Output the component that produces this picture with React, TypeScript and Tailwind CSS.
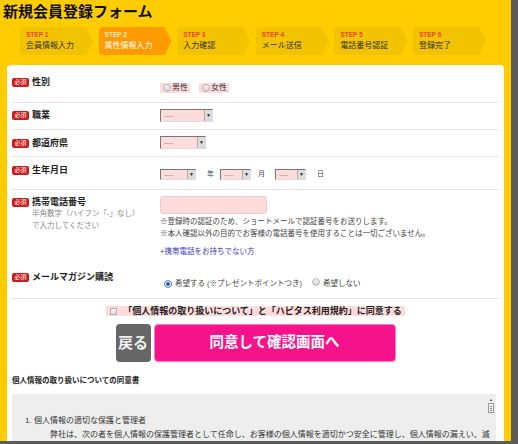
import React from 'react'

const STEPS = [
  { n: 1, label: '会員情報入力' },
  { n: 2, label: '属性情報入力', active: true },
  { n: 3, label: '入力確認' },
  { n: 4, label: 'メール送信' },
  { n: 5, label: '電話番号認証' },
  { n: 6, label: '登録完了' },
]

function Badge() {
  return (
    <span className="inline-flex h-[9px] w-[17px] shrink-0 items-center justify-center rounded-[2px] bg-[#cc1a1a] text-[6px] leading-none text-white">
      必須
    </span>
  )
}

function Label({ children }: { children: React.ReactNode }) {
  return (
    <div className="flex w-[148px] shrink-0 items-center gap-[3px]">
      <Badge />
      <span className="text-[9px] leading-[12px] font-bold text-[#222]">{children}</span>
    </div>
  )
}

function Select({ className }: { className: string }) {
  return (
    <div
      className={`flex border border-t-[#777] border-r-[#ddd] border-b-[#ddd] border-l-[#777] bg-[#ffdcdc] ${className}`}
    >
      <span className="flex flex-1 items-center pl-[3px] text-[7px] leading-none text-[#888]">----</span>
      <span className="flex w-[8px] items-center justify-center border-l border-[#aaa] bg-[#dcdcdc] text-[5px] leading-none text-[#222]">
        ▼
      </span>
    </div>
  )
}

function Radio({ checked }: { checked?: boolean }) {
  return checked ? (
    <span className="inline-flex size-[8px] shrink-0 items-center justify-center rounded-full border border-[#5a7db5] bg-white">
      <span className="size-[4px] rounded-full bg-[#2a5aa8]" />
    </span>
  ) : (
    <span className="inline-block size-[8px] shrink-0 rounded-full border border-[#b5b5b5] bg-linear-to-b from-[#f4f4f4] to-[#d4d4d4]" />
  )
}

export default function App() {
  return (
    <div className="h-[444px] w-[518px] overflow-hidden bg-[#5b5b5b] font-['Liberation_Sans','Noto_Sans_CJK_JP',sans-serif]">
      <div className="flex h-[441px] w-[511px] flex-col overflow-hidden bg-[#ffcc00]">
        {/* タイトル */}
        <h1 className="pt-[2px] pl-[3px] text-[15px] leading-[20px] font-bold text-[#111]">新規会員登録フォーム</h1>

        {/* ステップ */}
        <div className="mt-[5px] ml-[20px] flex gap-[5.6px]">
          {STEPS.map((s) => (
            <div
              key={s.n}
              className={`h-[28px] w-[73px] rounded-l-[4px] pt-[3px] pl-[6px] [clip-path:polygon(0_0,calc(100%_-_7px)_0,100%_50%,calc(100%_-_7px)_100%,0_100%)] ${
                s.active ? 'bg-[#ff9a00]' : 'bg-[#f2c300]'
              }`}
            >
              <div className={`text-[6.5px] leading-[9px] font-bold ${s.active ? 'text-[#ffe9c8]' : 'text-[#e8471c]'}`}>
                STEP {s.n}
              </div>
              <div className={`mt-[1px] text-[8px] leading-[11px] ${s.active ? 'text-white' : 'text-[#333]'}`}>{s.label}</div>
            </div>
          ))}
        </div>

        {/* フォーム */}
        <div className="mx-[7px] mt-[10px] flex-1 rounded-t-[4px] bg-white px-[5px]">
          {/* 性別 */}
          <div className="flex h-[38px] items-start border-b border-[#e6e6e6]">
            <div className="pt-[11px]">
              <Label>性別</Label>
            </div>
            <div className="flex gap-[9px] pt-[18px]">
              <span className="flex h-[10px] items-center gap-[1px] bg-[#ffdcdc] pr-[2px] pl-[3px] text-[8px] text-[#333]">
                <Radio />
                男性
              </span>
              <span className="flex h-[10px] items-center gap-[1px] bg-[#ffdcdc] pr-[2px] pl-[3px] text-[8px] text-[#333]">
                <Radio />
                女性
              </span>
            </div>
          </div>

          {/* 職業 */}
          <div className="flex h-[27px] items-start border-b border-[#e6e6e6]">
            <div className="pt-[6px]">
              <Label>職業</Label>
            </div>
            <div className="pt-[6px]">
              <Select className="h-[13px] w-[53px]" />
            </div>
          </div>

          {/* 都道府県 */}
          <div className="flex h-[27px] items-start border-b border-[#e6e6e6]">
            <div className="pt-[7px]">
              <Label>都道府県</Label>
            </div>
            <div className="pt-[6px]">
              <Select className="h-[13px] w-[46px]" />
            </div>
          </div>

          {/* 生年月日 */}
          <div className="flex h-[33px] items-start border-b border-[#e6e6e6]">
            <div className="pt-[7px]">
              <Label>生年月日</Label>
            </div>
            <div className="flex items-center pt-[12px] text-[7px] text-[#444]">
              <Select className="h-[11px] w-[36px]" />
              <span className="mr-[6px] ml-[11px]">年</span>
              <Select className="h-[11px] w-[31px]" />
              <span className="mr-[10px] ml-[7px]">月</span>
              <Select className="h-[11px] w-[31px]" />
              <span className="ml-[11px]">日</span>
            </div>
          </div>

          {/* 携帯電話番号・メルマガ */}
          <div className="border-b border-[#e6e6e6]">
            <div className="flex h-[75px] items-start">
              <div className="w-[148px] shrink-0 pt-[6px]">
                <Label>携帯電話番号</Label>
                <div className="pl-[20px] text-[7.5px] leading-[12px] text-[#888]">
                  <div>半角数字（ハイフン「-」なし）</div>
                  <div>で入力してください</div>
                </div>
              </div>
              <div className="pt-[6px]">
                <div className="h-[18px] w-[107px] rounded-[3px] border border-[#f3caca] bg-[#ffdcdc]" />
                <div className="mt-[2px] text-[7.5px] leading-[12px] text-[#444]">
                  <div>※登録時の認証のため、ショートメールで認証番号をお送りします。</div>
                  <div>※本人確認以外の目的でお客様の電話番号を使用することは一切ございません。</div>
                </div>
                <div className="mt-[6px] text-[7.5px] leading-[12px] text-[#3a3ab8]">+携帯電話をお持ちでない方</div>
              </div>
            </div>
            <div className="flex h-[33px] items-start">
              <div className="pt-[6px]">
                <Label>メールマガジン購読</Label>
              </div>
              <div className="flex items-center pt-[13px] pl-[4px] text-[7.5px] leading-[10px] text-[#444]">
                <Radio checked />
                <span className="ml-[3px]">希望する (※プレゼントポイントつき)</span>
                <span className="ml-[10px]">
                  <Radio />
                </span>
                <span className="ml-[3px]">希望しない</span>
              </div>
            </div>
          </div>

          {/* 同意 */}
          <div className="flex flex-col items-center pt-[7px]">
            <div className="flex h-[10px] items-center gap-[6px] bg-[#ffdcdc] pr-[3px] pl-[4px]">
              <span className="inline-block size-[7px] border border-[#b0b0b0] bg-linear-to-b from-[#f4f4f4] to-[#dadada]" />
              <span className="text-[9px] leading-[10px] font-bold text-[#222]">
                「個人情報の取り扱いについて」と「ハピタス利用規約」に同意する
              </span>
            </div>
            <div className="mt-[8px] flex gap-[3px]">
              <div className="flex h-[38px] w-[35px] items-center justify-center rounded-[4px] bg-[#666] text-[15px] font-bold text-[#f0f0f0]">
                戻る
              </div>
              <div className="flex h-[38px] w-[242px] items-center justify-center rounded-[4px] border border-[#ff7ac0] bg-[#f5128a] text-[14.5px] font-bold text-white">
                同意して確認画面へ
              </div>
            </div>
          </div>

          {/* 同意書 */}
          <div className="mt-[13px] text-[7.5px] leading-[12px] font-bold text-[#222]">個人情報の取り扱いについての同意書</div>
          <div className="relative mt-[7px] h-[60px] w-[484px] bg-[#eeeeee] pt-[20px] pl-[13px] text-[8px] leading-[14px] text-[#333]">
            <div>1. 個人情報の適切な保護と管理者</div>
            <div className="pl-[25px] whitespace-nowrap">
              弊社は、次の者を個人情報の保護管理者として任命し、お客様の個人情報を適切かつ安全に管理し、個人情報の漏えい、滅
            </div>
            {/* スクロールバー */}
            <div className="absolute top-[3px] right-[2px] flex w-[6px] flex-col items-center">
              <span className="text-[4px] leading-[6px] text-[#555]">▲</span>
              <span className="flex h-[10px] w-[6px] flex-col justify-center gap-[1px] border border-[#999] bg-[#f4f4f4] px-[1px]">
                <span className="h-px bg-[#888]" />
                <span className="h-px bg-[#888]" />
                <span className="h-px bg-[#888]" />
              </span>
            </div>
          </div>
        </div>
      </div>
    </div>
  )
}
